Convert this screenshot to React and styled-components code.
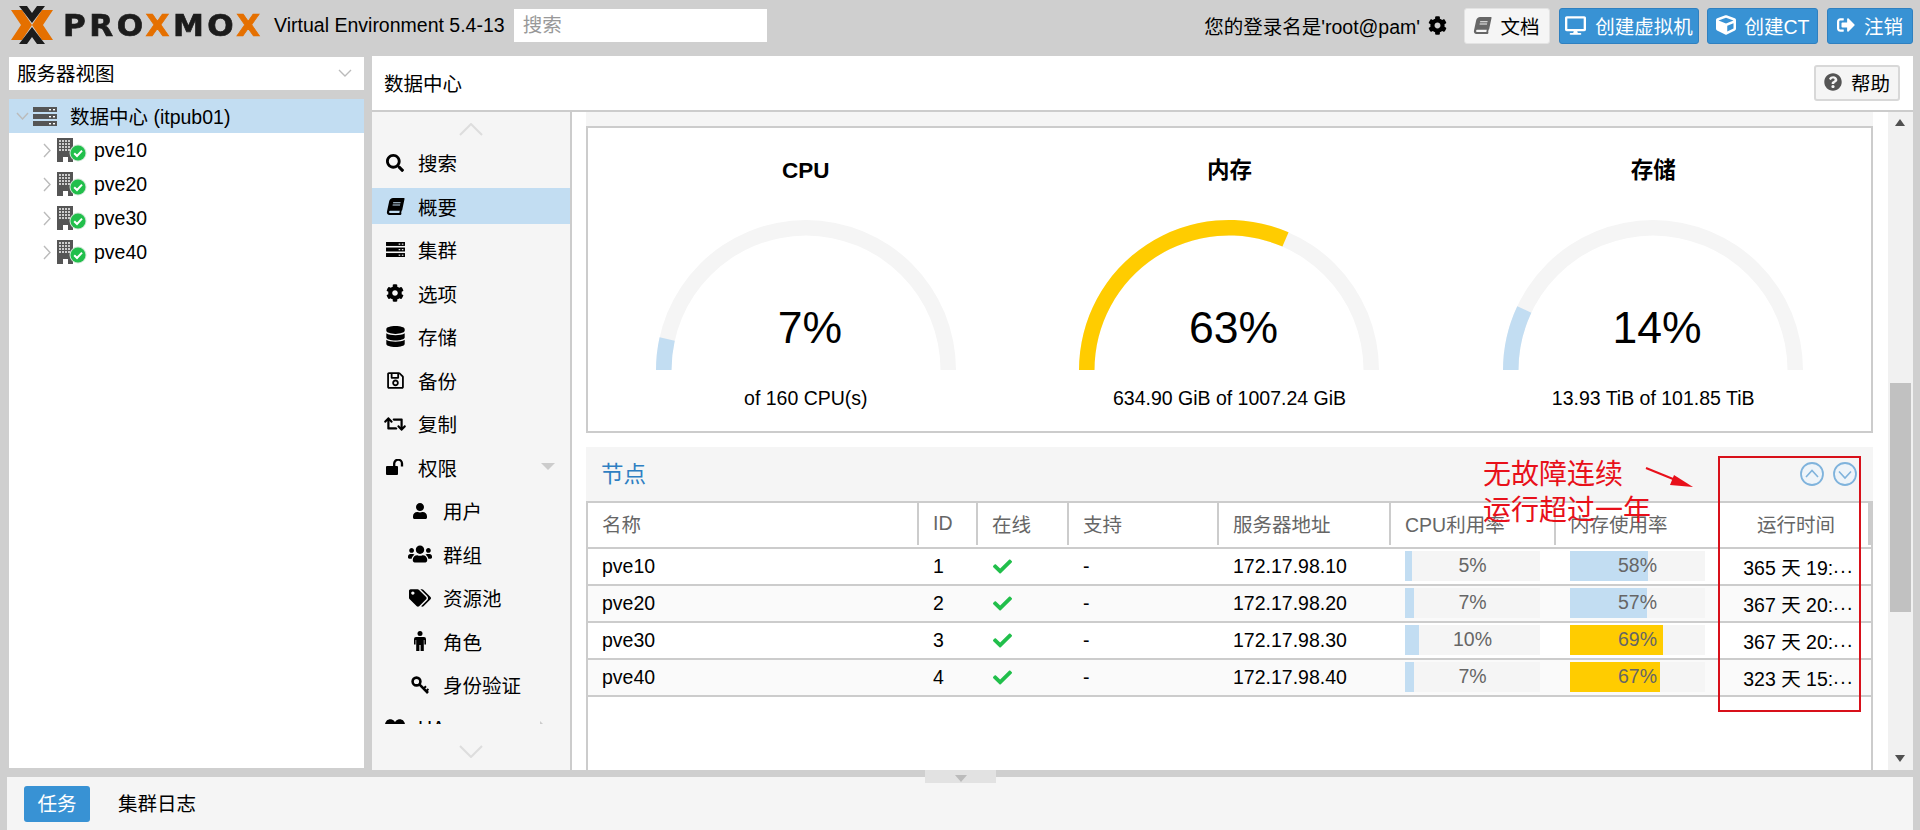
import React from 'react';
import styled, { createGlobalStyle } from 'styled-components';
import {
  FaSearch, FaBook, FaCog, FaDatabase, FaRegSave, FaRetweet, FaUser, FaUsers, FaTags,
  FaDesktop, FaCube, FaSignOutAlt, FaCheck, FaQuestionCircle, FaHeartbeat,
} from 'react-icons/fa';

const Global = createGlobalStyle`
  html, body { margin: 0; padding: 0; }
  body { font-family: "Liberation Sans", "Noto Sans CJK SC", sans-serif; font-size: 19.5px; color: #000; }
  * { box-sizing: border-box; }
`;

const Root = styled.div`
  position: relative;
  width: 1920px;
  height: 830px;
  background: #cfcfcf;
  display: flex;
  flex-direction: column;
  overflow: hidden;
`;

/* ---------- top bar ---------- */
const TopBar = styled.header`
  height: 56px;
  flex: none;
  display: flex;
  align-items: flex-start;
  padding: 0 7px 0 11px;
`;
const Logo = styled.div`
  display: flex;
  align-items: center;
  height: 50px;
  filter: blur(0.5px);
`;
const LogoText = styled.span`
  font-family: "DejaVu Sans", sans-serif;
  font-weight: 700;
  font-size: 31px;
  letter-spacing: 3.55px;
  margin-left: 10px;
  color: #1c1c1c;
  -webkit-text-stroke: 0.7px currentColor;
  white-space: nowrap;
`;
const Orange = styled.span`
  color: #e57000;
`;
const Version = styled.span`
  margin-left: 10.5px;
  line-height: 50px;
  white-space: nowrap;
`;
const SearchBox = styled.div`
  margin: 9px 0 0 9px;
  width: 253px;
  height: 33px;
  background: #fff;
  color: #999;
  padding-left: 9px;
  line-height: 33px;
`;
const TopRight = styled.div`
  margin-left: auto;
  display: flex;
  align-items: center;
  height: 36px;
  margin-top: 8px;
  gap: 9px;
`;
const Login = styled.span`
  display: flex;
  align-items: center;
  gap: 8px;
  margin-right: 8px;
  padding-bottom: 2px;
  white-space: nowrap;
`;
const TopButton = styled.div`
  width: ${p => p.$w}px;
  height: 36px;
  margin-right: ${p => p.$mr || 0}px;
  padding-bottom: 2px;
  border-radius: 3px;
  border: 1px solid ${p => (p.$light ? '#e3e3e3' : '#2f80c0')};
  background: ${p => (p.$light ? '#f5f5f5' : '#3892d4')};
  color: ${p => (p.$light ? '#000' : '#fff')};
  display: flex;
  align-items: center;
  justify-content: center;
  gap: 9px;
  white-space: nowrap;
  svg { flex: none; color: ${p => (p.$light ? '#666' : '#fff')}; }
`;

/* ---------- main ---------- */
const Main = styled.div`
  flex: none;
  height: 714px;
  display: flex;
  gap: 8px;
  padding: 0 7px 0 9px;
`;
const LeftColumn = styled.div`
  width: 355px;
  flex: none;
  display: flex;
  flex-direction: column;
  padding: 1px 0 2px;
  gap: 9px;
`;
const ViewSelect = styled.div`
  height: 33px;
  flex: none;
  background: #fff;
  padding: 0 12px 2px 8px;
  display: flex;
  align-items: center;
  justify-content: space-between;
`;
const Tree = styled.div`
  flex: 1;
  background: #fff;
`;
const TreeRow = styled.div`
  height: 34px;
  display: flex;
  align-items: center;
  background: ${p => (p.$selected ? '#c2ddf2' : 'transparent')};
  padding-left: ${p => p.$indent}px;
`;
const TreeLabel = styled.span`
  margin-left: ${p => p.$gap}px;
  padding-bottom: ${p => p.$lift || 0}px;
  white-space: nowrap;
`;

const Center = styled.div`
  flex: 1;
  min-width: 0;
  display: flex;
  flex-direction: column;
`;
const TitleBar = styled.div`
  height: 56px;
  flex: none;
  background: #fff;
  border-bottom: 2px solid #ccc;
  display: flex;
  align-items: center;
  justify-content: space-between;
  padding: 0 13px 0 12px;
`;
const TitleText = styled.span`
  padding-bottom: 2px;
`;
const HelpButton = styled.div`
  width: 86px;
  height: 36px;
  padding-bottom: 2px;
  background: #f5f5f5;
  border: 2px solid #d8d8d8;
  border-radius: 3px;
  display: flex;
  align-items: center;
  justify-content: center;
  gap: 9px;
  svg { color: #555; }
`;
const Body = styled.div`
  flex: 1;
  min-height: 0;
  display: flex;
  background: #fff;
`;

/* ---------- nav ---------- */
const Nav = styled.nav`
  width: 200px;
  flex: none;
  background: #f5f5f5;
  border-right: 2px solid #ccc;
  display: flex;
  flex-direction: column;
`;
const NavArrow = styled.div`
  flex: none;
  height: ${p => p.$h}px;
  padding-top: ${p => p.$pt}px;
  display: flex;
  align-items: center;
  justify-content: center;
`;
const NavList = styled.div`
  flex: none;
  height: 583px;
  overflow: hidden;
`;
const NavItem = styled.div`
  height: 43.5px;
  display: flex;
  align-items: center;
`;
const NavInner = styled.div`
  width: 100%;
  height: 36px;
  display: flex;
  align-items: center;
  padding-left: ${p => (p.$sub ? 36 : 11)}px;
  background: ${p => (p.$active ? '#c2ddf2' : 'transparent')};
`;
const NavIcon = styled.span`
  width: 24px;
  height: 24px;
  margin-right: 11px;
  flex: none;
  display: flex;
  align-items: center;
  justify-content: center;
`;
const NavText = styled.span`
  white-space: nowrap;
`;
const NavCaret = styled.span`
  margin-left: auto;
  margin-right: ${p => p.$right}px;
  display: flex;
`;

/* ---------- content ---------- */
const Content = styled.div`
  flex: 1;
  min-width: 0;
  padding: 0 15px 0 14px;
  display: flex;
  flex-direction: column;
  overflow: hidden;
`;
const TopStrip = styled.div`
  height: 14px;
  flex: none;
  background: #f5f5f5;
`;
const GaugePanel = styled.section`
  flex: none;
  height: 307px;
  border: 2px solid #ccc;
  padding: 0 6px;
  display: grid;
  grid-template-columns: repeat(3, 1fr);
`;
const GaugeBox = styled.div`
  display: flex;
  flex-direction: column;
  align-items: center;
  padding-top: 26px;
`;
const GaugeTitle = styled.div`
  font-size: 22.5px;
  font-weight: 700;
  line-height: 34px;
  margin-bottom: 32px;
`;
const GaugeDial = styled.div`
  position: relative;
  width: 300px;
  height: 150px;
  svg { display: block; }
`;
const GaugeValue = styled.div`
  position: absolute;
  left: 8px;
  right: 0;
  top: 83px;
  text-align: center;
  font-size: 44.5px;
  line-height: 50px;
`;
const GaugeSub = styled.div`
  margin-top: 14px;
  line-height: 28px;
  white-space: nowrap;
`;

const NodesPanel = styled.section`
  position: relative;
  margin-top: 14px;
  flex: 1;
  min-height: 0;
  display: flex;
  flex-direction: column;
  border-left: 2px solid #ccc;
  border-right: 2px solid #ccc;
`;
const NodesHead = styled.div`
  height: 54px;
  flex: none;
  margin: 0 -2px;
  background: #f5f5f5;
  display: flex;
  align-items: center;
  justify-content: space-between;
  padding: 0 16px 0 15px;
`;
const NodesTitle = styled.div`
  font-size: 22.5px;
  color: #2f7fc2;
  padding-bottom: 4px;
`;
const Tools = styled.div`
  display: flex;
  gap: 9px;
`;
const columns = '331px 59px 91px 150px 172px 165px 164px 148px 1fr';
const HeadRow = styled.div`
  height: 48px;
  flex: none;
  display: grid;
  grid-template-columns: ${columns};
  border-top: 2px solid #ccc;
  border-bottom: 2px solid #ccc;
  color: #666;
`;
const HeadCell = styled.div`
  display: flex;
  align-items: center;
  height: 42px;
  padding: ${p => (p.$right ? '0 31px 2px 0' : '0 0 2px 14px')};
  justify-content: ${p => (p.$right ? 'flex-end' : 'flex-start')};
  border-right: 2px solid ${p => (p.$last ? 'transparent' : '#ccc')};
  white-space: nowrap;
`;
const HeadFiller = styled.div`
  background: #ccc;
  height: 42px;
`;
const Row = styled.div`
  height: 37px;
  flex: none;
  display: grid;
  grid-template-columns: ${columns};
  border-bottom: 2px solid #ccc;
  background: ${p => (p.$alt ? '#fafafa' : '#fff')};
`;
const Cell = styled.div`
  display: flex;
  align-items: center;
  padding: ${p => (p.$right ? '0 14px 0 0' : '0 0 0 14px')};
  justify-content: ${p => (p.$right ? 'flex-end' : 'flex-start')};
  white-space: nowrap;
  svg { color: #21bf4b; margin-left: 1px; }
`;
const UptimeDots = styled.span`
  letter-spacing: 1.5px;
`;
const BarCell = styled.div`
  padding: 2px 0 0 14px;
`;
const Bar = styled.div`
  position: relative;
  width: 135px;
  height: 30px;
  background: #f5f5f5;
`;
const BarFill = styled.div`
  height: 100%;
  background: ${p => (p.$warn ? '#ffcc00' : '#c2ddf2')};
`;
const BarText = styled.div`
  position: absolute;
  inset: 0;
  text-align: center;
  line-height: 29px;
  color: #666;
`;

/* ---------- annotation ---------- */
const RedBox = styled.div`
  position: absolute;
  left: 1130px;
  top: 9px;
  width: 143px;
  height: 256px;
  border: 2px solid #d8101a;
`;
const RedNote = styled.div`
  position: absolute;
  left: 895px;
  top: 10px;
  font-size: 28px;
  line-height: 36px;
  color: #e8101a;
  white-space: nowrap;
`;
const RedArrow = styled.svg`
  position: absolute;
  left: 1056px;
  top: 19px;
`;

/* ---------- scrollbar ---------- */
const ScrollBar = styled.div`
  width: 25px;
  flex: none;
  background: #f1f1f1;
  display: flex;
  flex-direction: column;
  align-items: center;
  padding: 7px 0 8px;
`;
const ScrollUp = styled.div`
  width: 0;
  height: 0;
  border: 5.5px solid transparent;
  border-top: 0;
  border-bottom: 7px solid #505050;
  margin-left: -1px;
`;
const ScrollDown = styled.div`
  width: 0;
  height: 0;
  border: 5.5px solid transparent;
  border-bottom: 0;
  border-top: 7px solid #505050;
  margin: auto 0 0 -1px;
`;
const ScrollThumb = styled.div`
  width: 21px;
  height: 229px;
  margin-top: 257px;
  background: #c1c1c1;
`;

/* ---------- bottom ---------- */
const Bottom = styled.footer`
  margin: 7px 7px 0;
  flex: 1;
  background: #f5f5f5;
  display: flex;
  align-items: center;
  padding: 0 0 0 17px;
`;
const Tab = styled.div`
  width: ${p => p.$w}px;
  height: 36px;
  line-height: 36px;
  text-align: center;
  border-radius: 3px;
  background: ${p => (p.$active ? '#3892d4' : 'transparent')};
  color: ${p => (p.$active ? '#fff' : '#000')};
  margin-right: 17px;
`;
const CollapseTab = styled.div`
  position: absolute;
  left: 925px;
  top: 770px;
  width: 71px;
  height: 13px;
  background: #e2e2e2;
  display: flex;
  justify-content: center;
  padding-top: 5px;
`;
const CollapseTri = styled.div`
  width: 0;
  height: 0;
  border: 6px solid transparent;
  border-bottom: 0;
  border-top: 7px solid #bbb;
`;

/* ---------- drawings ---------- */
const LogoMark = () => (
  <svg width="42" height="38" viewBox="0 0 42 38">
    <path d="M0 4 L11 4 L21 19 L11 34 L0 34 L10 19 Z" fill="#e57000" />
    <path d="M42 4 L31 4 L21 19 L31 34 L42 34 L32 19 Z" fill="#e57000" />
    <path d="M8 0 L16 0 L21 7 L26 0 L34 0 L21 17 Z" fill="#1c1c1c" />
    <path d="M8 38 L16 38 L21 31 L26 38 L34 38 L21 21 Z" fill="#1c1c1c" />
  </svg>
);

const Chevron = ({ dir = 'down', w = 14, h = 8, color = '#bbb', sw = 1.4 }) => {
  const d = {
    down: `M1 1 L${w / 2} ${h - 1} L${w - 1} 1`,
    up: `M1 ${h - 1} L${w / 2} 1 L${w - 1} ${h - 1}`,
    right: `M1 1 L${w - 1} ${h / 2} L1 ${h - 1}`,
  }[dir];
  return (
    <svg width={w} height={h} viewBox={`0 0 ${w} ${h}`} style={{ flex: 'none' }}>
      <path d={d} fill="none" stroke={color} strokeWidth={sw} />
    </svg>
  );
};

const ServerIcon = ({ w = 24, h = 19, color = '#555' }) => (
  <svg width={w} height={h} viewBox="0 0 24 19" style={{ flex: 'none' }}>
    {[0, 7, 14].map(y => (
      <g key={y}>
        <rect x="0" y={y} width="24" height="5" fill={color} />
        <rect x="16" y={y + 2} width="2" height="1.4" fill="#fff" />
        <rect x="20" y={y + 2} width="2" height="1.4" fill="#fff" />
      </g>
    ))}
  </svg>
);

const NodeIcon = () => (
  <svg width="30" height="25" viewBox="0 0 30 25" style={{ flex: 'none' }}>
    <rect x="0" y="0" width="16" height="24" fill="#555" />
    {[2, 5, 8, 11].map(y =>
      [2, 5, 8, 11].map(x => <rect key={`${x}-${y}`} x={x} y={y} width="2" height="2" fill="#ccc" />)
    )}
    <rect x="6" y="19" width="5" height="5" fill="#fff" />
    <circle cx="21" cy="15" r="8.5" fill="#cfe6d5" />
    <circle cx="21" cy="15" r="7.5" fill="#21bf4b" />
    <path d="M17.2 15.2 L20 18 L25 12.6" fill="none" stroke="#fff" strokeWidth="2" />
  </svg>
);

const UnlockIcon = () => (
  <svg width="18" height="16" viewBox="0 0 18 16">
    <rect x="0" y="7" width="12" height="9" rx="1" fill="#000" />
    <path d="M8.2 8 V4.6 A3.9 3.9 0 0 1 16 4.6 V7.5" fill="none" stroke="#000" strokeWidth="2.3" />
  </svg>
);

const MaleIcon = () => (
  <svg width="14" height="20" viewBox="0 0 14 20">
    <circle cx="7" cy="2.5" r="2.5" fill="#000" />
    <path d="M3 6 H11 Q13 6 13 8 V13.5 H11.4 V9 H10.8 V20 H7.6 V14 H6.4 V20 H3.2 V9 H2.6 V13.5 H1 V8 Q1 6 3 6 Z" fill="#000" />
  </svg>
);

const KeyIcon = () => (
  <svg width="18" height="18" viewBox="0 0 18 18">
    <circle cx="5.5" cy="5.5" r="3.9" fill="none" stroke="#000" strokeWidth="2.6" />
    <path d="M8.4 8.4 L17 17" stroke="#000" strokeWidth="2.6" />
    <path d="M12.6 12.6 L15 10.2 M15.2 15.2 L17.4 13" stroke="#000" strokeWidth="2" />
  </svg>
);

const Caret = ({ dir }) => (
  <svg width="14" height="14" viewBox="0 0 14 14">
    {dir === 'down'
      ? <path d="M0 3 H14 L7 10 Z" fill="#ccc" />
      : <path d="M2 0 L9 7 L2 14 Z" fill="#ccc" />}
  </svg>
);

const ToolCircle = ({ up }) => (
  <svg width="24" height="24" viewBox="0 0 24 24">
    <circle cx="12" cy="12" r="11" fill="#eef4f9" stroke="#7fb3dc" strokeWidth="1.8" />
    <path d={up ? 'M6 15 L12 8.5 L18 15' : 'M6 9.5 L12 16 L18 9.5'} fill="none" stroke="#7fb3dc" strokeWidth="1.6" />
  </svg>
);

const polar = (r, a) => [150 - r * Math.cos(a), 150 - r * Math.sin(a)];
const sector = (pct) => {
  const a = Math.PI * pct;
  const [ox, oy] = polar(150, a);
  const [ix, iy] = polar(134.5, a);
  return `M0 150 A150 150 0 0 1 ${ox} ${oy} L${ix} ${iy} A134.5 134.5 0 0 0 15.5 150 Z`;
};

const Gauge = ({ title, pct, sub, warn }) => (
  <GaugeBox>
    <GaugeTitle>{title}</GaugeTitle>
    <GaugeDial>
      <svg width="300" height="150" viewBox="0 0 300 150">
        <path d={sector(1)} fill="#f5f5f5" />
        <path d={sector(pct / 100)} fill={warn ? '#ffcc00' : '#c2ddf2'} />
      </svg>
      <GaugeValue>{pct}%</GaugeValue>
    </GaugeDial>
    <GaugeSub>{sub}</GaugeSub>
  </GaugeBox>
);

/* ---------- data ---------- */
const navItems = [
  { icon: <FaSearch size={18} />, label: '搜索' },
  { icon: <FaBook size={17} style={{ transform: 'skewX(-12deg)' }} />, label: '概要', active: true },
  { icon: <ServerIcon w={19} h={15} color="#000" />, label: '集群' },
  { icon: <FaCog size={18} />, label: '选项' },
  { icon: <FaDatabase size={21} />, label: '存储' },
  { icon: <FaRegSave size={19} />, label: '备份' },
  { icon: <FaRetweet size={22} />, label: '复制' },
  { icon: <UnlockIcon />, label: '权限', caret: 'down' },
  { icon: <FaUser size={16} />, label: '用户', sub: true },
  { icon: <FaUsers size={24} />, label: '群组', sub: true },
  { icon: <FaTags size={22} />, label: '资源池', sub: true },
  { icon: <MaleIcon />, label: '角色', sub: true },
  { icon: <KeyIcon />, label: '身份验证', sub: true },
  { icon: <FaHeartbeat size={20} />, label: 'HA', caret: 'right' },
];

const nodes = [
  { name: 'pve10', id: 1, ip: '172.17.98.10', cpu: 5, mem: 58, up: '365 天 19:' },
  { name: 'pve20', id: 2, ip: '172.17.98.20', cpu: 7, mem: 57, up: '367 天 20:' },
  { name: 'pve30', id: 3, ip: '172.17.98.30', cpu: 10, mem: 69, up: '367 天 20:' },
  { name: 'pve40', id: 4, ip: '172.17.98.40', cpu: 7, mem: 67, up: '323 天 15:' },
];

const Usage = ({ value }) => (
  <BarCell>
    <Bar>
      <BarFill $warn={value > 60} style={{ width: `${value}%` }} />
      <BarText>{value}%</BarText>
    </Bar>
  </BarCell>
);

export default function App() {
  return (
    <Root>
      <Global />
      <TopBar>
        <Logo>
          <LogoMark />
          <LogoText>PRO<Orange>X</Orange>MO<Orange>X</Orange></LogoText>
        </Logo>
        <Version>Virtual Environment 5.4-13</Version>
        <SearchBox>搜索</SearchBox>
        <TopRight>
          <Login>您的登录名是'root@pam' <FaCog size={19} /></Login>
          <TopButton $w={86} $light><FaBook size={17} style={{ transform: 'skewX(-12deg)' }} />文档</TopButton>
          <TopButton $w={140} $mr={-1}><FaDesktop size={21} />创建虚拟机</TopButton>
          <TopButton $w={111}><FaCube size={20} />创建CT</TopButton>
          <TopButton $w={86}><FaSignOutAlt size={18} />注销</TopButton>
        </TopRight>
      </TopBar>

      <Main>
        <LeftColumn>
          <ViewSelect>
            服务器视图
            <Chevron />
          </ViewSelect>
          <Tree>
            <TreeRow $selected $indent={7}>
              <Chevron w={13} h={8} />
              <span style={{ width: 4 }} />
              <ServerIcon />
              <TreeLabel $gap={13} $lift={2}>数据中心 (itpub01)</TreeLabel>
            </TreeRow>
            {nodes.map(n => (
              <TreeRow key={n.name} $indent={34}>
                <Chevron dir="right" w={8} h={15} />
                <span style={{ width: 6 }} />
                <NodeIcon />
                <TreeLabel $gap={7}>{n.name}</TreeLabel>
              </TreeRow>
            ))}
          </Tree>
        </LeftColumn>

        <Center>
          <TitleBar>
            <TitleText>数据中心</TitleText>
            <HelpButton><FaQuestionCircle size={18} />帮助</HelpButton>
          </TitleBar>
          <Body>
            <Nav>
              <NavArrow $h={29} $pt={5}><Chevron dir="up" w={24} h={13} color="#ddd" sw={2} /></NavArrow>
              <NavList>
                {navItems.map(item => (
                  <NavItem key={item.label}>
                    <NavInner $sub={item.sub} $active={item.active}>
                      <NavIcon>{item.icon}</NavIcon>
                      <NavText>{item.label}</NavText>
                      {item.caret && (
                        <NavCaret $right={item.caret === 'down' ? 15 : 18}><Caret dir={item.caret} /></NavCaret>
                      )}
                    </NavInner>
                  </NavItem>
                ))}
              </NavList>
              <NavArrow $h={46} $pt={8}><Chevron w={24} h={13} color="#ddd" sw={2} /></NavArrow>
            </Nav>
            <Content>
              <TopStrip />
              <GaugePanel>
                <Gauge title="CPU" pct={7} sub="of 160 CPU(s)" />
                <Gauge title="内存" pct={63} sub="634.90 GiB of 1007.24 GiB" warn />
                <Gauge title="存储" pct={14} sub="13.93 TiB of 101.85 TiB" />
              </GaugePanel>
              <NodesPanel>
                <NodesHead>
                  <NodesTitle>节点</NodesTitle>
                  <Tools>
                    <ToolCircle up />
                    <ToolCircle />
                  </Tools>
                </NodesHead>
                <HeadRow>
                  <HeadCell>名称</HeadCell>
                  <HeadCell>ID</HeadCell>
                  <HeadCell>在线</HeadCell>
                  <HeadCell>支持</HeadCell>
                  <HeadCell>服务器地址</HeadCell>
                  <HeadCell>CPU利用率</HeadCell>
                  <HeadCell $last>内存使用率</HeadCell>
                  <HeadCell $right $last>运行时间</HeadCell>
                  <HeadFiller />
                </HeadRow>
                {nodes.map((n, i) => (
                  <Row key={n.name} $alt={i % 2 === 1}>
                    <Cell>{n.name}</Cell>
                    <Cell>{n.id}</Cell>
                    <Cell><FaCheck size={19} /></Cell>
                    <Cell>-</Cell>
                    <Cell>{n.ip}</Cell>
                    <Usage value={n.cpu} />
                    <Usage value={n.mem} />
                    <Cell $right>{n.up}<UptimeDots>...</UptimeDots></Cell>
                    <div />
                  </Row>
                ))}
                <RedBox />
                <RedNote>无故障连续<br />运行超过一年</RedNote>
                <RedArrow width="50" height="24" viewBox="0 0 50 24">
                  <path d="M2 2 L34 15" stroke="#e8101a" strokeWidth="2" />
                  <path d="M30 9 L49 21 L26 19 Z" fill="#e8101a" />
                </RedArrow>
              </NodesPanel>
            </Content>
            <ScrollBar>
              <ScrollUp />
              <ScrollThumb />
              <ScrollDown />
            </ScrollBar>
          </Body>
        </Center>
      </Main>

      <Bottom>
        <Tab $w={66} $active>任务</Tab>
        <Tab $w={100}>集群日志</Tab>
      </Bottom>
      <CollapseTab><CollapseTri /></CollapseTab>
    </Root>
  );
}
